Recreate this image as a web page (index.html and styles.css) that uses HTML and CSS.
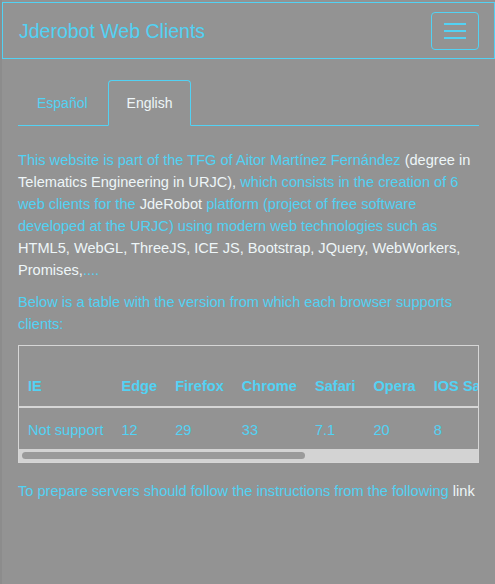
FILE: index.html
```html
<!DOCTYPE html>
<html lang="en">
<head>
<meta charset="utf-8">
<title>Jderobot Web Clients</title>
<link rel="stylesheet" href="styles.css">
</head>
<body>
<nav class="navbar">
  <span class="brand">Jderobot Web Clients</span>
  <button class="toggle" type="button" aria-label="Menu">
    <span class="bar"></span><span class="bar"></span><span class="bar"></span>
  </button>
</nav>
<main class="content">
  <ul class="tabs">
    <li class="tab"><a href="#">Español</a></li>
    <li class="tab active"><a href="#">English</a></li>
  </ul>
  <p class="text">This website is part of the TFG of Aitor Martínez Fernández <span class="w">(degree in Telematics Engineering in URJC),</span> which consists in the creation of 6 web clients for the <span class="w">JdeRobot</span> platform (project of free software developed at the URJC) using modern web technologies such as <span class="w">HTML5, WebGL, ThreeJS, ICE JS, Bootstrap, JQuery, WebWorkers, Promises,</span>....</p>
  <p class="text">Below is a table with the version from which each browser supports clients:</p>
  <div class="table-box">
    <div class="table-wrap">
      <table class="browsers">
        <thead>
          <tr><th>IE</th><th>Edge</th><th>Firefox</th><th>Chrome</th><th>Safari</th><th>Opera</th><th>IOS Safari</th><th>Android<br>Browser</th><th>Chrome for<br>Android</th></tr>
        </thead>
        <tbody>
          <tr><td>Not support</td><td>12</td><td>29</td><td>33</td><td>7.1</td><td>20</td><td>8</td><td>4.4.4</td><td>55</td></tr>
        </tbody>
      </table>
    </div>
    <div class="scrollbar"><div class="thumb" style="width: 283px"></div></div>
  </div>
  <p class="text last">To prepare servers should follow the instructions from the following <a class="link" href="#">link</a></p>
</main>
</body>
</html>
```
FILE: styles.css
```css
html, body {
  margin: 0;
  padding: 0;
  background: #939393;
}
body {
  font-family: "Liberation Sans", Arial, sans-serif;
  font-size: 14.6px;
  line-height: 22px;
  color: #52d2f4;
  border-left: 2px solid #8c8c8c;
  min-height: 584px;
  box-sizing: border-box;
}
.navbar {
  margin-top: 2px;
  height: 55px;
  border: 1px solid #52d2f4;
  display: flex;
  align-items: center;
  justify-content: space-between;
  padding: 0 15px 0 16px;
}
.brand {
  font-size: 19.5px;
  color: #52d2f4;
}
.toggle {
  width: 48px;
  height: 38px;
  box-sizing: border-box;
  background: transparent;
  border: 1px solid #52d2f4;
  border-radius: 4px;
  display: flex;
  flex-direction: column;
  justify-content: center;
  align-items: center;
  gap: 5px;
  padding: 0;
}
.bar {
  display: block;
  width: 22px;
  height: 2px;
  background: #52d2f4;
}
.content {
  padding: 21px 16px 0 16px;
}
.tabs {
  list-style: none;
  margin: 0;
  padding: 0;
  display: flex;
  gap: 1px;
  border-bottom: 1px solid #52d2f4;
}
.tab a {
  display: block;
  padding: 11px 18px 11px;
  font-size: 14px;
  line-height: 22px;
  color: #52d2f4;
  text-decoration: none;
  border: 1px solid transparent;
  border-radius: 4px 4px 0 0;
  margin-bottom: -1px;
}
.tab.active a {
  padding-right: 17px;
  color: #eef6f8;
  border-color: #52d2f4;
  border-bottom-color: #939393;
  background: #939393;
}
.text {
  margin: 23px 0 10px;
}
.text + .text {
  margin-top: 10px;
}
.w, .link {
  color: #eef6f8;
}
.link {
  text-decoration: none;
}
.table-box {
  margin-top: 10px;
  border: 1px solid #d6d6d6;
}
.table-wrap {
  overflow: hidden;
}
.scrollbar {
  height: 13px;
  background: #d3d3d3;
  display: flex;
  align-items: center;
  padding-left: 3px;
}
.thumb {
  height: 7px;
  background: #9a9a9a;
  border-radius: 4px;
}
.browsers {
  border-collapse: collapse;
  white-space: nowrap;
}
.browsers th, .browsers td {
  padding: 8px 9px 8px 9px;
  text-align: left;
  vertical-align: bottom;
}
.browsers th {
  font-weight: bold;
  border-bottom: 2px solid #d6d6d6;
  padding-bottom: 9px;
  padding-top: 7px;
}
.browsers td {
  vertical-align: top;
  padding-top: 11px;
  padding-bottom: 8px;
}
.text.last {
  margin-top: 17px;
}
```
